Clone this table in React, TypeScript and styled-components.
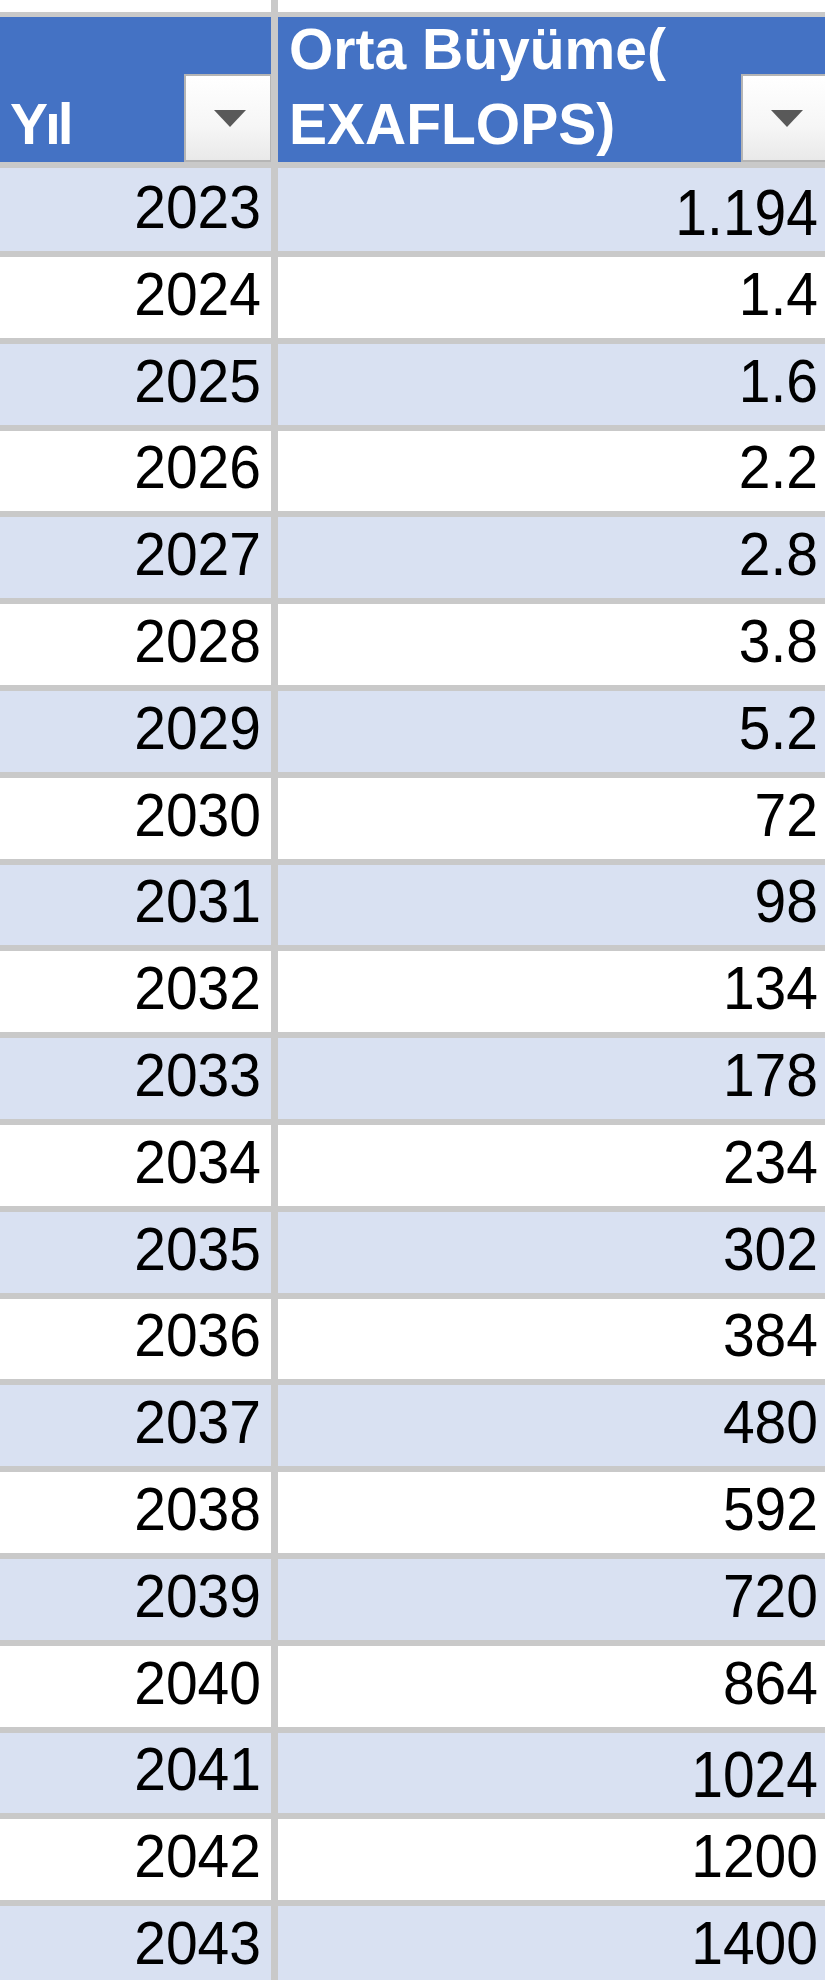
import React from 'react';
import styled, { createGlobalStyle } from 'styled-components';

// Excel tablo görünümü: Yıl / Orta Büyüme(EXAFLOPS)

const GlobalStyle = createGlobalStyle`
	html, body {
		margin: 0;
		padding: 0;
		background: #ffffff;
		overflow: hidden;
	}
	body {
		font-family: 'Liberation Sans', Arial, sans-serif;
	}
`;

const rows: { year: number; value: string; low?: boolean }[] = [
	{ year: 2023, value: '1.194', low: true },
	{ year: 2024, value: '1.4' },
	{ year: 2025, value: '1.6' },
	{ year: 2026, value: '2.2' },
	{ year: 2027, value: '2.8' },
	{ year: 2028, value: '3.8' },
	{ year: 2029, value: '5.2' },
	{ year: 2030, value: '72' },
	{ year: 2031, value: '98' },
	{ year: 2032, value: '134' },
	{ year: 2033, value: '178' },
	{ year: 2034, value: '234' },
	{ year: 2035, value: '302' },
	{ year: 2036, value: '384' },
	{ year: 2037, value: '480' },
	{ year: 2038, value: '592' },
	{ year: 2039, value: '720' },
	{ year: 2040, value: '864' },
	{ year: 2041, value: '1024', low: true },
	{ year: 2042, value: '1200' },
	{ year: 2043, value: '1400' },
];

const Sheet = styled.div`
	width: 835px;
	display: flex;
	flex-direction: column;
`;

const Row = styled.div<{ $h: number; $line: number }>`
	display: grid;
	grid-template-columns: 271px 550px;
	grid-template-rows: ${(p) => p.$h}px;
	column-gap: 7px;
	background: #c9c9c9;
	padding-bottom: ${(p) => p.$line}px;
`;

const BlankCell = styled.div`
	background: #ffffff;
`;

const HeadCell = styled.div`
	background: #4472c4;
	display: flex;
	align-items: flex-end;
	justify-content: space-between;
	overflow: visible;
`;

const HeadText = styled.div<{ $pad: number; $tight?: boolean }>`
	padding-left: ${(p) => p.$pad}px;
	color: #ffffff;
	font-weight: 700;
	font-size: 57px;
	line-height: 75px;
	letter-spacing: ${(p) => (p.$tight ? '-3px' : '0')};
	white-space: nowrap;
`;

const FilterButton = styled.div`
	box-sizing: border-box;
	width: 87px;
	height: 88px;
	flex-shrink: 0;
	background: linear-gradient(#ffffff 0%, #f6f6f6 60%, #e9e9e9 100%);
	border: 2px solid #b5b5b5;
	border-right-width: 1px;
	display: flex;
	align-items: center;
	justify-content: center;
	padding-left: 4px;
`;

const Cell = styled.div<{ $band: boolean; $low?: boolean }>`
	background: ${(p) => (p.$band ? '#d9e1f2' : '#ffffff')};
	display: flex;
	align-items: flex-end;
	justify-content: flex-end;
	padding: 0 10px ${(p) => (p.$low ? 6 : 13)}px 0;
	color: #000000;
	font-size: 57px;
	line-height: 57px;

	span {
		display: inline-block;
		transform-origin: bottom right;
		transform: ${(p) => (p.$low ? 'scaleY(1.14)' : 'scaleY(1.06)')};
	}
`;

const Arrow = () => (
	<svg width="34" height="19" viewBox="0 0 34 19">
		<path d="M1 1 L33 1 L17 18 Z" fill="#595959" />
	</svg>
);

export default function App() {
	return (
		<React.Fragment>
			<GlobalStyle />
			<Sheet>
				<Row $h={12} $line={5}>
					<BlankCell />
					<BlankCell />
				</Row>
				<Row $h={145} $line={6}>
					<HeadCell>
						<HeadText $pad={10} $tight>
							Yıl
						</HeadText>
						<FilterButton>
							<Arrow />
						</FilterButton>
					</HeadCell>
					<HeadCell>
						<HeadText $pad={11}>
							Orta Büyüme(
							<br />
							EXAFLOPS)
						</HeadText>
						<FilterButton>
							<Arrow />
						</FilterButton>
					</HeadCell>
				</Row>
				{rows.map((r, i) => (
					<Row key={r.year} $h={i === 0 ? 83 : 80.8} $line={6}>
						<Cell $band={i % 2 === 0}>
							<span>{r.year}</span>
						</Cell>
						<Cell $band={i % 2 === 0} $low={r.low}>
							<span>{r.value}</span>
						</Cell>
					</Row>
				))}
			</Sheet>
		</React.Fragment>
	);
}
